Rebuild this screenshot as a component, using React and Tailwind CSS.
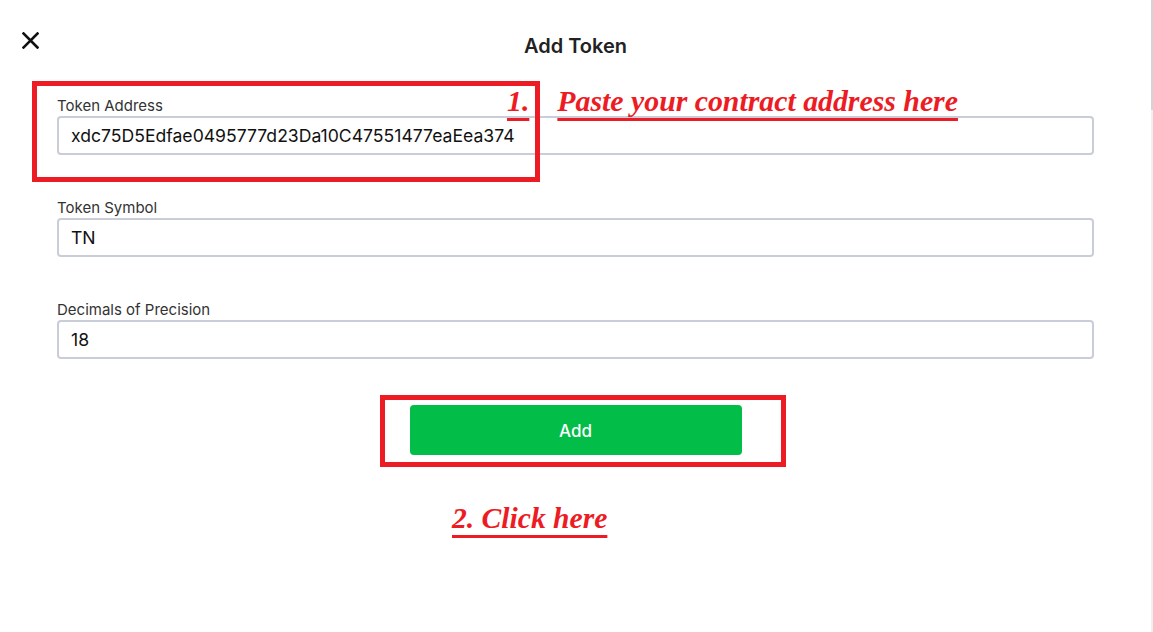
import React from "react";

const inter = { fontFamily: "Inter, 'Noto Sans', sans-serif" };

function Field({ label, value }) {
  return (
    <div className="flex flex-col">
      <label className="text-[15px] leading-[20px] text-[#333333]">{label}</label>
      <input
        readOnly
        defaultValue={value}
        className="h-[39px] w-full rounded-[4px] border-2 border-[#c9cdd8] bg-white pl-[12px] text-[17.6px] text-[#111111] outline-none"
      />
    </div>
  );
}

export default function App() {
  return (
    <div className="flex h-[632px] w-full bg-white" style={inter}>
      <div className="relative flex-1">
        <div className="grid grid-cols-[1fr_auto_1fr] items-start px-[22px] pt-[32px]">
          <svg width="17" height="17" viewBox="0 0 17 17" className="block">
            <path d="M1.5 1.5 L15.5 15.5 M15.5 1.5 L1.5 15.5" stroke="#111" strokeWidth="2.6" strokeLinecap="square" fill="none" />
          </svg>
          <h1 className="text-[20px] leading-[28px] font-semibold text-[#222222]">Add Token</h1>
          <div />
        </div>

        <div className="mt-[36px] flex flex-col gap-[43px] px-[57px]">
          <Field label="Token Address" value="xdc75D5Edfae0495777d23Da10C47551477eaEea374" />
          <Field label="Token Symbol" value="TN" />
          <Field label="Decimals of Precision" value="18" />
        </div>

        <div className="mt-[46px] flex justify-center">
          <button className="h-[50px] w-[332px] rounded-[4px] bg-[#03bd49] pt-[3px] text-[17px] font-medium text-white">
            Add
          </button>
        </div>

        {/* annotations */}
        <div className="absolute left-[32px] top-[81px] h-[101px] w-[508px] border-[5px] border-[#ed1c24]" />
        <div className="absolute left-[380px] top-[395px] h-[72px] w-[406px] border-[5px] border-[#ed1c24]" />
        <div
          className="absolute left-[507px] top-[86px] flex gap-[28px] text-[29.8px] leading-[30px] font-bold italic text-[#ed1c24] whitespace-nowrap"
          style={{ fontFamily: "'Liberation Serif', 'Times New Roman', serif" }}
        >
          <span className="underline decoration-[2.5px] underline-offset-[7px]">1.</span>
          <span className="underline decoration-[2.5px] underline-offset-[7px]">Paste your contract address here</span>
        </div>
        <div
          className="absolute left-[452px] top-[503px] text-[29.6px] leading-[30px] font-bold italic text-[#ed1c24] whitespace-nowrap underline decoration-[2.5px] underline-offset-[7px]"
          style={{ fontFamily: "'Liberation Serif', 'Times New Roman', serif" }}
        >
          2. Click here
        </div>
      </div>
      <div className="flex w-[2px] flex-col bg-[#f0f0f0]">
        <div className="h-[110px] bg-[#d1d5db]" />
      </div>
    </div>
  );
}
